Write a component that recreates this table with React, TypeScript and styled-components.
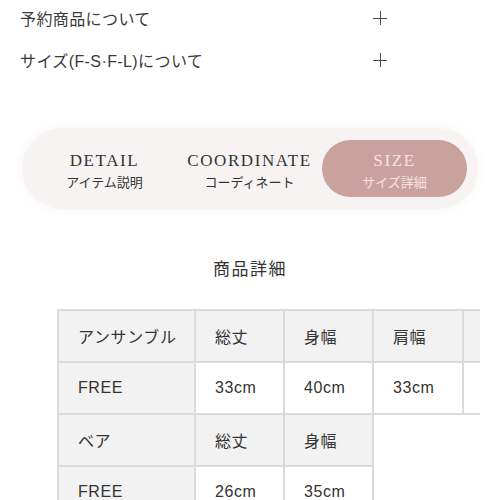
import React from "react";
import styled, { createGlobalStyle } from "styled-components";

const Global = createGlobalStyle`
  html, body { margin: 0; padding: 0; background: #ffffff; }
  body {
    font-family: "Liberation Sans", "Noto Sans CJK JP", sans-serif;
    color: #333333;
    overflow: hidden;
  }
`;

const Page = styled.div`
  width: 500px;
  height: 500px;
  overflow: hidden;
  display: flex;
  flex-direction: column;
`;

const Accordion = styled.div`
  display: flex;
  flex-direction: column;
  gap: 6px;
  width: 387px;
  padding-left: 20px;
  box-sizing: border-box;
`;

const AccRow = styled.div`
  height: 36px;
  display: flex;
  align-items: center;
  justify-content: space-between;
  font-size: 16px;
  letter-spacing: 0.4px;
  color: #3a3a3a;
`;

const Plus = styled.span`
  position: relative;
  width: 14px;
  height: 14px;
  flex: none;
  &::before, &::after {
    content: "";
    position: absolute;
    background: #4a4a4a;
  }
  &::before { left: 0; right: 0; top: 6.5px; height: 1.2px; }
  &::after { top: 0; bottom: 0; left: 6.5px; width: 1.2px; }
`;

const TabBar = styled.div`
  margin: 50px 22px 0 22px;
  height: 87px;
  border-radius: 44px;
  background: #f8f3f3;
  box-shadow: 0 0 10px rgba(120, 90, 90, 0.06);
  box-sizing: border-box;
  padding: 12px 11px 12px 10px;
  display: grid;
  grid-template-columns: repeat(3, 145px);
`;

const Tab = styled.div<{ $active?: boolean }>`
  border-radius: 32px;
  background: ${(p) => (p.$active ? "#c9a29d" : "transparent")};
  display: flex;
  flex-direction: column;
  align-items: center;
  justify-content: center;
  gap: 2px;
  padding-top: 5px;
  box-sizing: border-box;
  color: ${(p) => (p.$active ? "#f6e2de" : "#333333")};
`;

const TabTitle = styled.span`
  font-family: "Liberation Serif", "DejaVu Serif", serif;
  font-size: 17px;
  letter-spacing: 1.6px;
  line-height: 20px;
`;

const TabSub = styled.span`
  font-family: "Noto Sans CJK JP", sans-serif;
  font-size: 13px;
  line-height: 18px;
`;

const Heading = styled.div`
  margin-top: 47px;
  text-align: center;
  font-family: "Noto Sans CJK JP", sans-serif;
  font-size: 17px;
  letter-spacing: 1.5px;
  line-height: 24px;
  color: #333333;
`;

const TableWrap = styled.div`
  margin: 29px 0 0 57px;
  width: 423px;
  overflow: hidden;
`;

const Table = styled.table`
  border-collapse: collapse;
  table-layout: fixed;
  width: 540px;
`;

const Cell = styled.td<{ $head?: boolean }>`
  height: 52px;
  box-sizing: border-box;
  padding: 0 0 0 19px;
  border: 2px solid #dadada;
  background: ${(p) => (p.$head ? "#f2f2f2" : "#ffffff")};
  font-size: 16px;
  letter-spacing: 0.6px;
  color: #333333;
  white-space: nowrap;
  text-align: left;
  vertical-align: middle;
`;

const widths = [137, 89, 89, 90, 135];

export default function App() {
  return (
    <>
      <Global />
      <Page>
        <Accordion>
          <AccRow>
            予約商品について
            <Plus />
          </AccRow>
          <AccRow>
            サイズ(F-S·F-L)について
            <Plus />
          </AccRow>
        </Accordion>

        <TabBar>
          <Tab>
            <TabTitle>DETAIL</TabTitle>
            <TabSub>アイテム説明</TabSub>
          </Tab>
          <Tab>
            <TabTitle>COORDINATE</TabTitle>
            <TabSub>コーディネート</TabSub>
          </Tab>
          <Tab $active>
            <TabTitle>SIZE</TabTitle>
            <TabSub>サイズ詳細</TabSub>
          </Tab>
        </TabBar>

        <Heading>商品詳細</Heading>

        <TableWrap>
          <Table>
            <colgroup>
              {widths.map((w, i) => (
                <col key={i} style={{ width: w }} />
              ))}
            </colgroup>
            <tbody>
              <tr>
                <Cell $head>アンサンブル</Cell>
                <Cell $head>総丈</Cell>
                <Cell $head>身幅</Cell>
                <Cell $head>肩幅</Cell>
                <Cell $head />
              </tr>
              <tr>
                <Cell $head>FREE</Cell>
                <Cell>33cm</Cell>
                <Cell>40cm</Cell>
                <Cell>33cm</Cell>
                <Cell />
              </tr>
              <tr>
                <Cell $head>ベア</Cell>
                <Cell $head>総丈</Cell>
                <Cell $head>身幅</Cell>
              </tr>
              <tr>
                <Cell $head>FREE</Cell>
                <Cell>26cm</Cell>
                <Cell>35cm</Cell>
              </tr>
            </tbody>
          </Table>
        </TableWrap>
      </Page>
    </>
  );
}
